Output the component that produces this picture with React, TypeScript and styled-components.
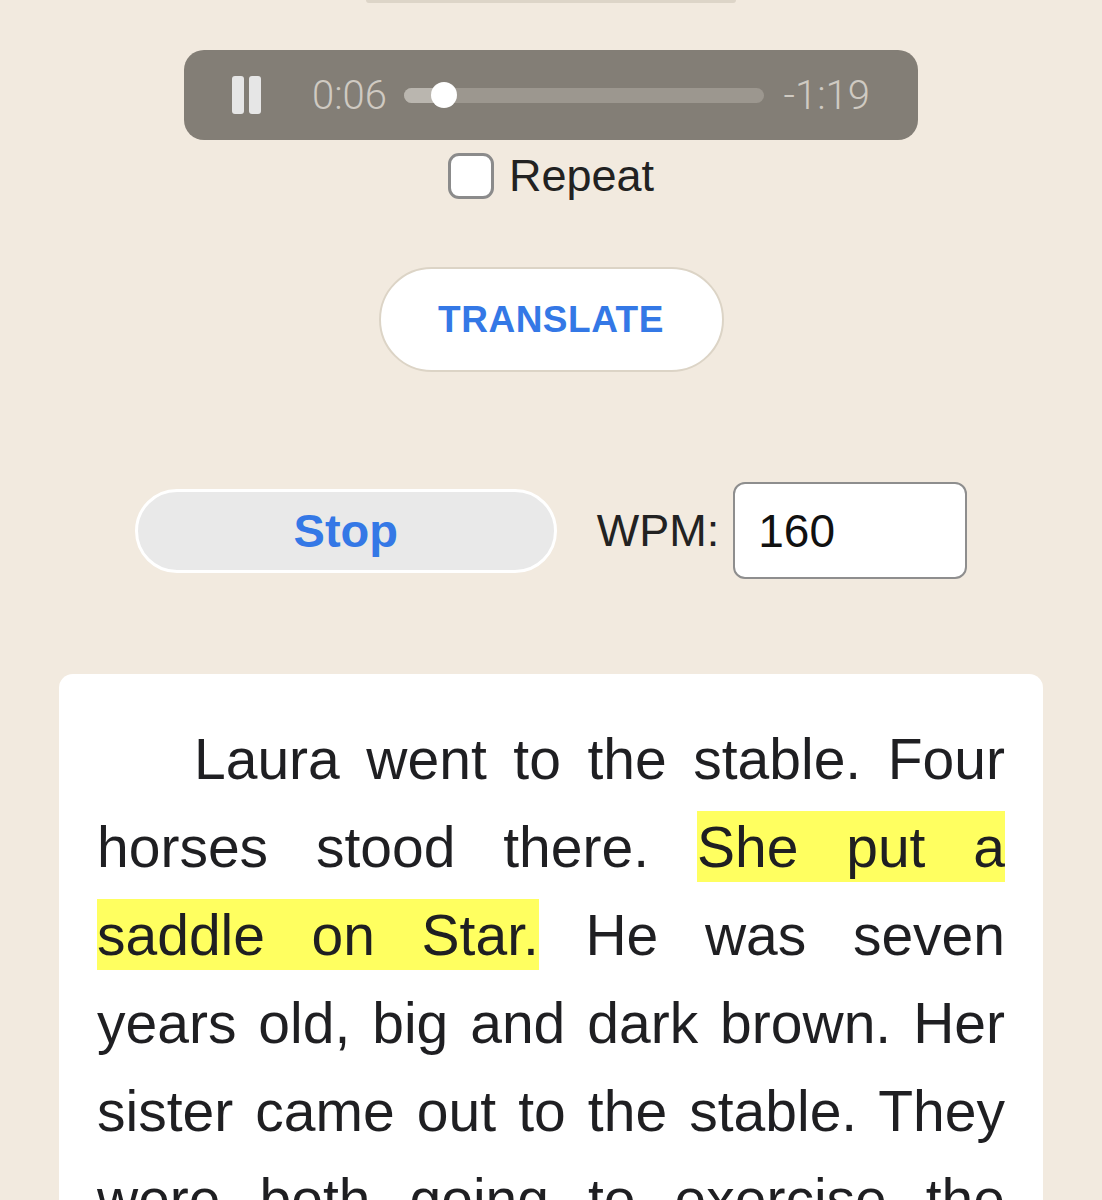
import React from 'react';
import styled, { createGlobalStyle } from 'styled-components';

const GlobalStyle = createGlobalStyle`
  html, body {
    margin: 0;
    padding: 0;
    background: #f2eadf;
  }
  body {
    font-family: "Liberation Sans", Arial, sans-serif;
    color: #222225;
  }
`;

const Page = styled.div`
  display: flex;
  flex-direction: column;
  align-items: center;
  padding: 0 59px 40px;
`;

const TopStub = styled.div`
  width: 370px;
  height: 3px;
  background: #ddd5c8;
  border-radius: 0 0 14px 14px;
`;

const Player = styled.div`
  margin-top: 47px;
  width: 734px;
  height: 90px;
  box-sizing: border-box;
  padding: 0 48px;
  display: flex;
  align-items: center;
  background: #837e76;
  border-radius: 20px;
`;

const PauseIcon = styled.div`
  display: flex;
  gap: 5px;
  height: 38px;
`;

const PauseBar = styled.span`
  width: 12px;
  height: 38px;
  border-radius: 3px;
  background: #e6e6e6;
`;

const Time = styled.span<{ $gapLeft: number }>`
  margin-left: ${p => p.$gapLeft}px;
  font-family: Roboto, "Liberation Sans", sans-serif;
  font-weight: 300;
  font-size: 40px;
  color: #cfcac2;
  white-space: nowrap;
`;

const Track = styled.div`
  position: relative;
  flex: 1;
  margin: 0 20px 0 17px;
  height: 15px;
  border-radius: 8px;
  background: #9c978f;
`;

const TrackFill = styled.div`
  height: 100%;
  border-radius: 8px;
  background: #bab6af;
`;

const Thumb = styled.div`
  position: absolute;
  top: 50%;
  width: 26px;
  height: 26px;
  border-radius: 50%;
  background: #ffffff;
  transform: translate(-50%, -50%);
`;

const RepeatRow = styled.label`
  margin-top: 13px;
  height: 46px;
  line-height: 46px;
  display: flex;
  align-items: center;
  gap: 15px;
  font-size: 45px;
  color: #222;
`;

const CheckBox = styled.input`
  appearance: none;
  margin: 0;
  width: 46px;
  height: 46px;
  box-sizing: border-box;
  border: 3px solid #8b8b8b;
  border-radius: 11px;
  background: #fff;
`;

const TranslateButton = styled.button`
  margin-top: 68px;
  width: 345px;
  height: 105px;
  border: 2px solid #dcd4c6;
  border-radius: 53px;
  background: #fff;
  color: #3478e6;
  font-family: "Liberation Sans", Arial, sans-serif;
  font-weight: 700;
  font-size: 37px;
  letter-spacing: 0.5px;
`;

const ControlRow = styled.div`
  margin-top: 110px;
  display: flex;
  align-items: center;
`;

const StopButton = styled.button`
  width: 422px;
  height: 84px;
  border: 3px solid #fff;
  border-radius: 42px;
  background: #e9e9e9;
  color: #3478e6;
  font-family: "Liberation Sans", Arial, sans-serif;
  font-weight: 700;
  font-size: 47px;
`;

const WpmLabel = styled.span`
  margin-left: 40px;
  font-size: 45px;
  color: #222;
`;

const WpmInput = styled.input`
  margin-left: 14px;
  width: 234px;
  height: 97px;
  box-sizing: border-box;
  border: 2px solid #8e8e8e;
  border-radius: 12px;
  padding: 0 0 0 23px;
  background: #fff;
  font-family: "Liberation Sans", Arial, sans-serif;
  font-size: 46px;
  color: #111;
  outline: none;
`;

const Card = styled.div`
  margin-top: 95px;
  align-self: stretch;
  background: #fff;
  border-radius: 14px;
  padding: 41px 38px 40px;
`;

const Passage = styled.p`
  margin: 0;
  font-size: 57px;
  line-height: 88px;
  text-align: justify;
  text-indent: 97px;
  color: #1f1f22;
`;

const Highlight = styled.span`
  background: #ffff60;
  padding: 4px 0 3px;
  -webkit-box-decoration-break: clone;
  box-decoration-break: clone;
`;

export default function App() {
  const progress = 0.11;
  return (
    <>
      <GlobalStyle />
      <Page>
        <TopStub />
        <Player>
          <PauseIcon>
            <PauseBar />
            <PauseBar />
          </PauseIcon>
          <Time $gapLeft={51}>0:06</Time>
          <Track>
            <TrackFill style={{ width: `${progress * 100}%` }} />
            <Thumb style={{ left: `${progress * 100}%` }} />
          </Track>
          <Time $gapLeft={0}>-1:19</Time>
        </Player>
        <RepeatRow>
          <CheckBox type="checkbox" />
          Repeat
        </RepeatRow>
        <TranslateButton>TRANSLATE</TranslateButton>
        <ControlRow>
          <StopButton>Stop</StopButton>
          <WpmLabel>WPM:</WpmLabel>
          <WpmInput defaultValue="160" />
        </ControlRow>
        <Card>
          <Passage>
            Laura went to the stable. Four horses stood there.{' '}
            <Highlight>She put a saddle on Star.</Highlight> He was seven years old, big
            and dark brown. Her sister came out to the stable. They were both going to
            exercise the horses. Laura rode Star and her sister rode a small grey mare.
            They went down the lane and over the hill.
          </Passage>
        </Card>
      </Page>
    </>
  );
}
